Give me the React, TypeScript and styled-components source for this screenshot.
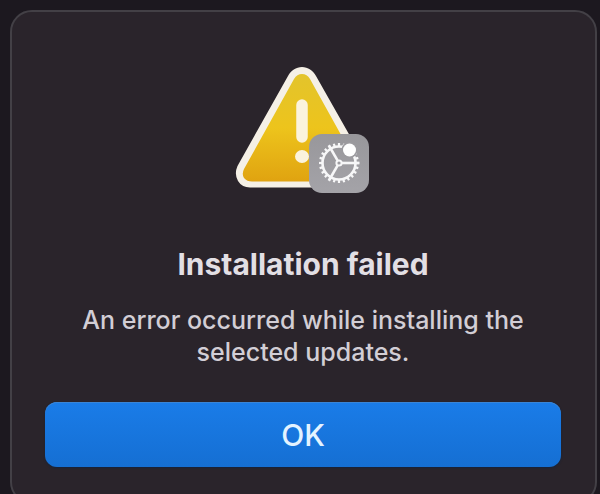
import React from "react";
import styled, { createGlobalStyle } from "styled-components";

const GlobalStyle = createGlobalStyle`
  * { box-sizing: border-box; }
  html, body { margin: 0; background: #1c181f; }
  body { overflow: hidden; font-family: Inter, "Liberation Sans", sans-serif; }
`;

const Backdrop = styled.main`
  padding: 10px 3px 10px 10px;
`;

const Dialog = styled.section`
  display: flex;
  flex-direction: column;
  align-items: center;
  padding: 54px 34px 35px 33px;
  border: 2px solid #434046;
  border-radius: 22px;
  background: #2a242b;
  text-align: center;
`;

const AlertIcon = styled.svg`
  display: block;
  width: 136px;
  height: 128px;
`;

const Title = styled.h1`
  margin: 52px 0 0;
  font-size: 30px;
  line-height: 36px;
  font-weight: 700;
  color: #e2dfe4;
`;

const Message = styled.p`
  max-width: 460px;
  margin: 22px 0 0;
  font-size: 25px;
  line-height: 32px;
  font-weight: 500;
  color: #d2ced5;
`;

const PrimaryButton = styled.button`
  width: 100%;
  height: 65px;
  margin-top: 34px;
  border: 0;
  border-radius: 12px;
  background: linear-gradient(#1a7ce8, #156fd3);
  box-shadow: inset 0 1px 0 #3a85d6, 0 1px 2px #14233c;
  color: #e4f3ff;
  font-family: inherit;
  font-size: 30px;
  line-height: 36px;
  font-weight: 500;
`;

const TEETH = Array.from({ length: 24 }, (_, i) => i * 15);
const SPOKES = [0, 120, 240];

function WarningIcon() {
  return (
    <AlertIcon viewBox="236 66 136 128" role="img" aria-label="Warning">
      <defs>
        <linearGradient id="yellow" x1="0" y1="0" x2="0" y2="1">
          <stop offset="0" stopColor="#e3c42c" />
          <stop offset="0.5" stopColor="#edc41c" />
          <stop offset="1" stopColor="#e0a310" />
        </linearGradient>
        <linearGradient id="grey" x1="0" y1="0" x2="0" y2="1">
          <stop offset="0" stopColor="#98979b" />
          <stop offset="1" stopColor="#a4a3a8" />
        </linearGradient>
      </defs>
      <path
        d="M289 76C292 70.500 297 67 303 67C309 67 314 70.500 317 76L368 166Q372 174 368 181Q364 187.500 356 187.500H251Q243 187.500 239 181Q235 174 238.500 166Z"
        fill="#f5f0e6"
      />
      <path
        d="M295 79Q298 74 303 74Q308 74 311 79L361 169Q364 174 361 178Q358.500 181.500 353 181.500H253Q248 181.500 245 178Q242.500 174 245 169Z"
        fill="url(#yellow)"
      />
      <path d="M303 105V137" stroke="#fbf3dd" strokeWidth="11.500" strokeLinecap="round" />
      <ellipse cx="303" cy="156.500" rx="7" ry="6.500" fill="#fbf3dd" />
      <rect x="310" y="134" width="60" height="59" rx="13" fill="url(#grey)" />
      <g stroke="#f7f7f8" fill="none" transform="translate(340 163)">
        <circle r="16.500" strokeWidth="2.600" />
        {TEETH.map((a) => (
          <path key={a} d="M17 0H20" strokeWidth="2.200" transform={`rotate(${a})`} />
        ))}
        {SPOKES.map((a) => (
          <path key={a} d="M3 0H20.500" strokeWidth="2.600" transform={`rotate(${a})`} />
        ))}
        <circle r="2.600" strokeWidth="2" />
      </g>
      <circle cx="350.500" cy="150" r="8" fill="#9c9b9f" />
      <circle cx="350.500" cy="150" r="6.500" fill="#fff" />
    </AlertIcon>
  );
}

export default function App() {
  return (
    <>
      <GlobalStyle />
      <Backdrop>
        <Dialog role="alertdialog" aria-labelledby="alert-title" aria-describedby="alert-message">
          <WarningIcon />
          <Title id="alert-title">Installation failed</Title>
          <Message id="alert-message">
            An error occurred while installing the selected updates.
          </Message>
          <PrimaryButton type="button">OK</PrimaryButton>
        </Dialog>
      </Backdrop>
    </>
  );
}
